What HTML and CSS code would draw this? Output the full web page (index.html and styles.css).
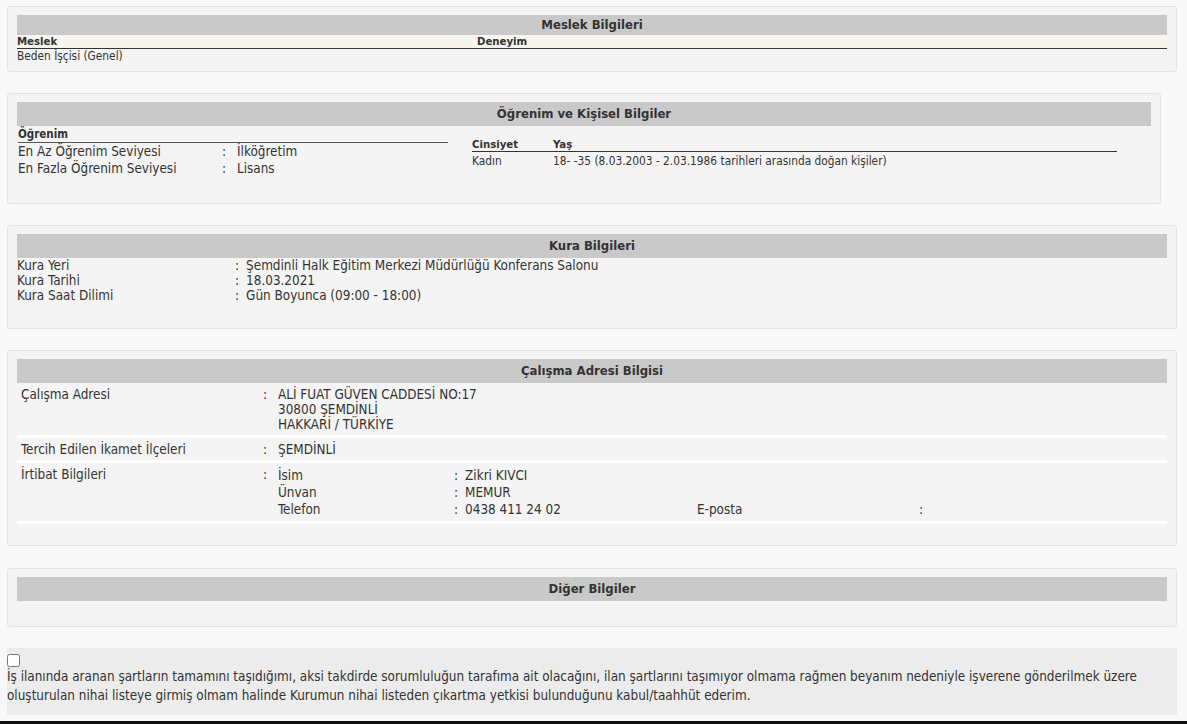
FILE: index.html
```html
<!doctype html>
<html>
	<head>
		<meta charset="utf-8">
		<link rel="stylesheet" href="styles.css">
	</head>
	<body>

		<div class="panel">
			<div class="panel-title small">Meslek Bilgileri</div>
			<table class="grid">
				<tr class="grid-head">
					<th class="col-job">Meslek</th>
					<th>Deneyim</th>
				</tr>
				<tr>
					<td>Beden İşçisi (Genel)</td>
					<td></td>
				</tr>
			</table>
		</div>

		<div class="panel panel-narrow">
			<div class="panel-title">Öğrenim ve Kişisel Bilgiler</div>
			<div class="edu">
				<div class="edu-left">
					<div class="edu-head">Öğrenim</div>
					<table class="kv kv-edu">
						<tr><td class="k">En Az Öğrenim Seviyesi</td><td class="c">:</td><td>İlköğretim</td></tr>
						<tr><td class="k">En Fazla Öğrenim Seviyesi</td><td class="c">:</td><td>Lisans</td></tr>
					</table>
				</div>
				<div class="edu-right">
					<table class="grid grid-plain">
						<tr class="grid-head">
							<th class="col-sex">Cinsiyet</th>
							<th>Yaş</th>
						</tr>
						<tr>
							<td>Kadın</td>
							<td>18- -35 (8.03.2003 - 2.03.1986 tarihleri arasında doğan kişiler)</td>
						</tr>
					</table>
				</div>
			</div>
		</div>

		<div class="panel">
			<div class="panel-title">Kura Bilgileri</div>
			<table class="kv kv-draw">
				<tr><td class="k">Kura Yeri</td><td><span class="sep">:</span>Şemdinli Halk Eğitim Merkezi Müdürlüğü Konferans Salonu</td></tr>
				<tr><td class="k">Kura Tarihi</td><td><span class="sep">:</span>18.03.2021</td></tr>
				<tr><td class="k">Kura Saat Dilimi</td><td><span class="sep">:</span>Gün Boyunca (09:00 - 18:00)</td></tr>
			</table>
		</div>

		<div class="panel panel-gap">
			<div class="panel-title">Çalışma Adresi Bilgisi</div>
			<table class="addr">
				<tr>
					<td class="k">Çalışma Adresi</td>
					<td class="c">:</td>
					<td>ALİ FUAT GÜVEN CADDESİ NO:17<br>30800 ŞEMDİNLİ<br>HAKKARİ / TÜRKİYE</td>
				</tr>
				<tr>
					<td class="k">Tercih Edilen İkamet İlçeleri</td>
					<td class="c">:</td>
					<td>ŞEMDİNLİ</td>
				</tr>
				<tr>
					<td class="k">İrtibat Bilgileri</td>
					<td class="c">:</td>
					<td>
						<table class="contact">
							<tr><td class="ck">İsim</td><td class="cv"><span class="sep">:</span>Zikri KIVCI</td><td class="ek"></td><td></td></tr>
							<tr><td class="ck">Ünvan</td><td class="cv"><span class="sep">:</span>MEMUR</td><td class="ek"></td><td></td></tr>
							<tr><td class="ck">Telefon</td><td class="cv"><span class="sep">:</span>0438 411 24 02</td><td class="ek">E-posta</td><td>:</td></tr>
						</table>
					</td>
				</tr>
			</table>
		</div>

		<div class="panel panel-other">
			<div class="panel-title">Diğer Bilgiler</div>
		</div>

		<div class="consent">
			<input type="checkbox" class="consent-box">
			<p class="consent-text">İş ilanında aranan şartların tamamını taşıdığımı, aksi takdirde sorumluluğun tarafıma ait olacağını, ilan şartlarını taşımıyor olmama rağmen beyanım nedeniyle işverene gönderilmek üzere oluşturulan nihai listeye girmiş olmam halinde Kurumun nihai listeden çıkartma yetkisi bulunduğunu kabul/taahhüt ederim.</p>
		</div>

	</body>
</html>
```

FILE: styles.css
```css
html {
	background: #f8f8f8;
}

body {
	margin: 0;
	padding: 6px 10px 0 7px;
	font-family: "DejaVu Sans Condensed", "DejaVu Sans", sans-serif;
	font-stretch: condensed;
	font-size: 13.4px;
	color: #333;
	border-bottom: 3px solid #111;
	min-height: 724px;
	box-sizing: border-box;
}

table {
	border-collapse: collapse;
	font-size: inherit;
}
td, th {
	padding: 0;
	text-align: left;
	vertical-align: top;
}

.sep {
	padding-right: 7px;
}

.panel {
	background: #f4f4f4;
	border: 1px solid #e2e2e2;
	border-radius: 3px;
	padding: 8px 9px;
	margin-bottom: 21px;
}
.panel-gap {
	margin-bottom: 22px;
}
.panel-narrow {
	margin-right: 16px;
}

.panel-title {
	background: #c9c9c9;
	text-align: center;
	font-size: 13px;
	font-weight: bold;
	line-height: 23px;
	height: 24px;
}
.panel-title.small {
	line-height: 19px;
	height: 20px;
}

/* meslek */
.grid {
	width: 100%;
	font-size: 11.8px;
	line-height: 13px;
}
.grid-head th {
	background: #f6f5f0;
	border-bottom: 1px solid #333;
	font-size: 11.3px;
	font-weight: bold;
}
.grid-plain .grid-head th {
	background: none;
}
.col-job {
	width: 460px;
}
.col-sex {
	width: 81px;
}
.grid tr + tr td {
	padding-top: 1px;
}
.grid-plain tr + tr td {
	padding-top: 3px;
}

/* ogrenim */
.edu {
	display: flex;
	gap: 24px;
	padding-left: 1px;
	min-height: 69px;
}
.edu-left {
	width: 430px;
}
.edu-right {
	width: 645px;
	margin-top: 12px;
}
.edu-head {
	font-size: 11.5px;
	font-weight: bold;
	line-height: 13px;
	margin-top: 2px;
	padding-bottom: 1px;
	border-bottom: 1px solid #555;
}
.kv-edu {
	line-height: 17px;
}
.kv-edu .k {
	width: 204px;
}
.kv-edu .c {
	width: 15px;
}

/* kura */
.kv-draw {
	line-height: 15px;
	margin-bottom: 17px;
}
.kv-draw .k {
	width: 218px;
}

/* adres */
.addr {
	width: 100%;
	margin-bottom: 13px;
	line-height: 15px;
}
.addr > tbody > tr > td {
	border-bottom: 3px solid #fff;
	padding: 4px 0 3px;
}
.addr .k {
	width: 242px;
	padding-left: 4px;
}
.addr .c {
	width: 15px;
}
.contact {
	width: 100%;
	line-height: 17px;
}
.contact td {
	padding: 0;
}
.contact .ck {
	width: 176px;
}
.contact .cv {
	width: 243px;
}
.contact .ek {
	width: 222px;
}

.panel-other {
	padding-bottom: 25px;
}

/* onay */
.consent {
	background: #ececec;
	padding: 6px 0 10px;
}
.consent-box {
	display: block;
	margin: 0;
	width: 13px;
	height: 13px;
}
.consent-text {
	margin: 0;
	line-height: 19px;
}
```
